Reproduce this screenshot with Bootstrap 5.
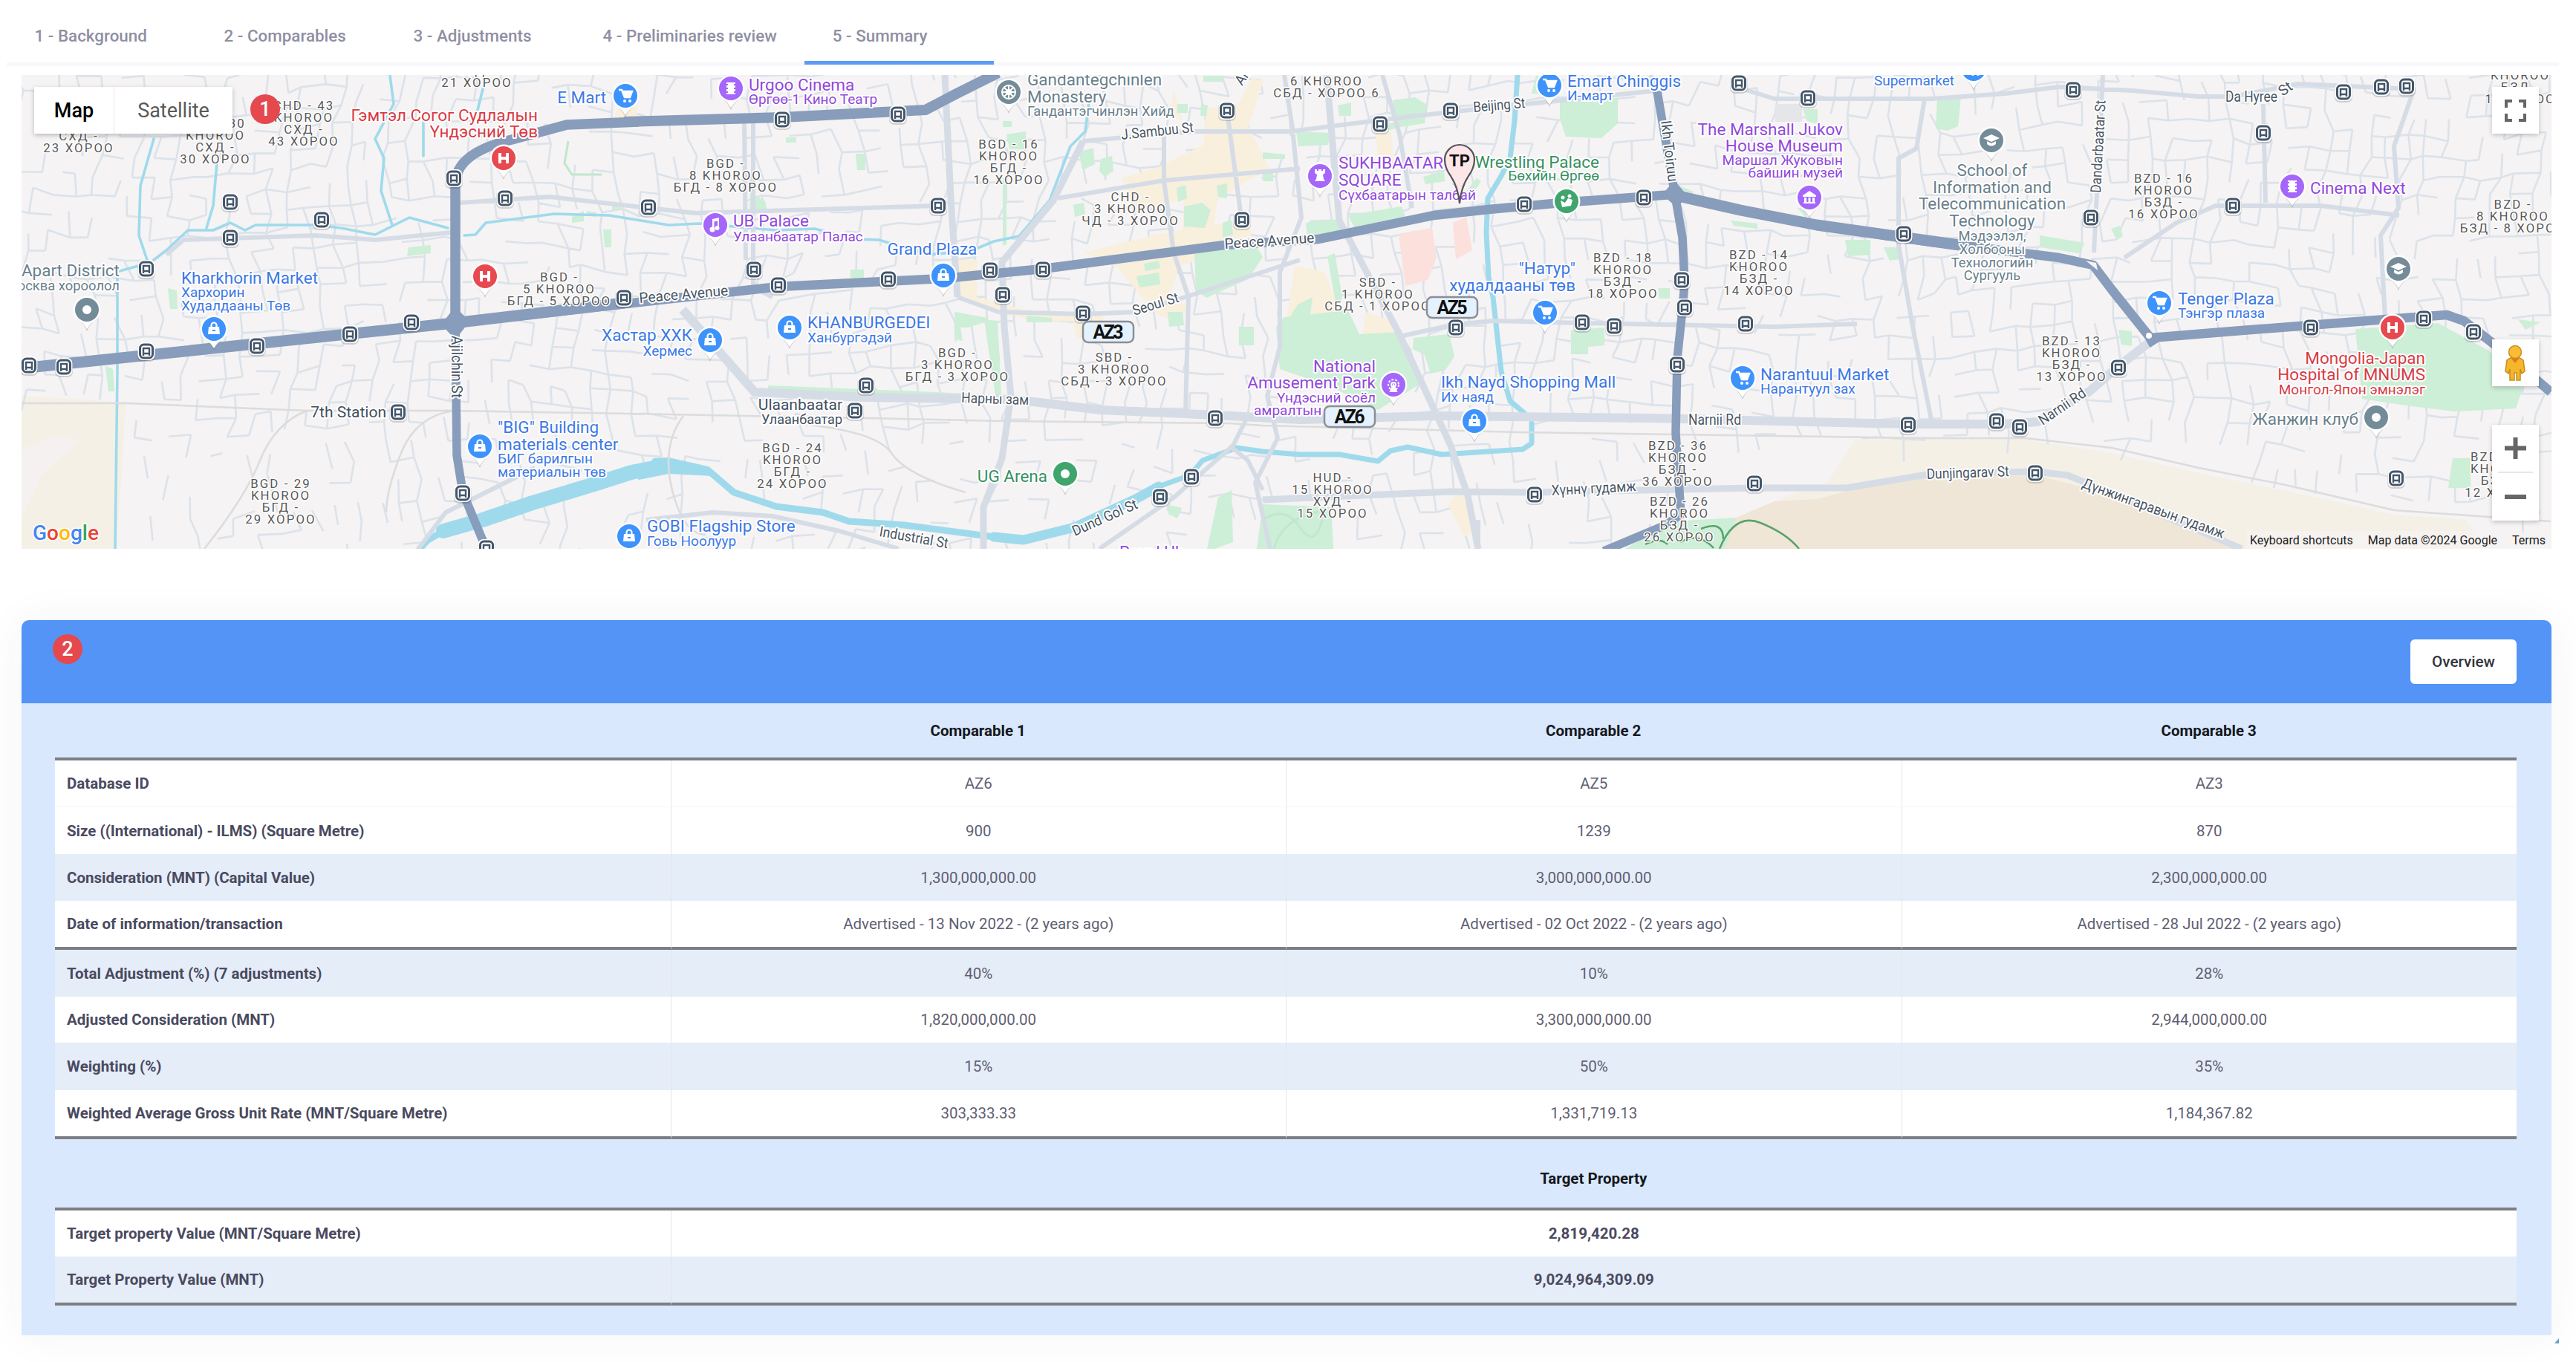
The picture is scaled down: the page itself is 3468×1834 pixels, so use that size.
<!DOCTYPE html>
<html lang="en">
<head>
<meta charset="utf-8">
<meta name="viewport" content="width=device-width, initial-scale=1">
<title>Valuation summary</title>
<link href="https://cdn.jsdelivr.net/npm/bootstrap@5.3.0/dist/css/bootstrap.min.css" rel="stylesheet">
<style>
  body { font-family: Roboto, "Liberation Sans", sans-serif; background: #fff; color: #47475e; font-size: 20.5px; overflow: hidden; }
  .steps { margin: 0 23px 0 9px; height: 89px; border-bottom: 5px solid #f8f8fc; }
  .steps .nav-link { min-width: 255px; height: 87px; padding: 0 37.5px; font-size: 22.4px; font-weight: 500; color: #8f8fa3; line-height: 96px; border: 0; white-space: nowrap; }
  .steps .nav-link.active { border-bottom: 5px solid #5b9cf6; }
  .map-frame { margin: 12px 33px 0 29px; height: 638px; overflow: hidden; }
  .map-frame svg.map-canvas { display: block; width: 3406px; height: 638px; }
  .map-type { top: 16px; left: 17px; height: 63px; font-size: 27px; color: #5a5a5a; box-shadow: 0 2px 6px rgba(0,0,0,.25); }
  .map-type span { line-height: 65px; text-align: center; }
  .map-type .type-on { width: 108px; color: #000; font-weight: 500; border-right: 1px solid #e6e6e6; }
  .map-type .type-off { width: 159px; }
  .step-dot { width: 40px; height: 40px; background: #e5484d; color: #fff; font-size: 27px; font-weight: 500; line-height: 41px; text-align: center; }
  .dot-map { top: 26px; left: 308px; }
  .dot-card { margin-top: 19px; }
  .map-tools { top: 16px; right: 17px; width: 63px; }
  .tool { width: 63px; background: #fff; box-shadow: 0 2px 6px rgba(0,0,0,.22); }
  .tool svg { display: block; }
  .tool-person { margin-top: 277px; }
  .tool-zoom { margin-top: 52px; }
  .legal { bottom: 0; right: 0; height: 24px; font-size: 16px; line-height: 17px; color: #222; background: rgba(245,243,243,.75); white-space: nowrap; }
  .summary { margin: 96px 33px 0 29px; background: #d9e8fc; border-radius: 12px 12px 0 0; box-shadow: 0 0 60px rgba(60,60,70,.05); height: 963px; }
  .summary-head { height: 112px; background: #5494f7; border-radius: 10px 10px 0 0; padding: 0 47px 0 42px; }
  .btn-overview { width: 143px; height: 60px; background: #fff; color: #33333b; font-size: 20.7px; font-weight: 500; border-radius: 6px; padding: 2px 0 0; border: 0; }
  .btn-overview:hover { background: #f3f3f3; }
  .figures { width: 3314px; margin-left: 45px; table-layout: fixed; border-collapse: separate; border-spacing: 0; line-height: 24px; }
  .figures th, .figures td { padding: 0 16px; vertical-align: middle; text-align: center; font-weight: 400; height: 63px; border-left: 1px solid #e3e6ea; }
  .figures th:first-child, .figures td:first-child { border-left: 0; }
  .figures tbody th { text-align: left; font-weight: 700; color: #4a4a60; }
  .figures tbody td { color: #5f5f74; }
  .figures .heading th { height: 77px; border-left: 0; border-bottom: 4px solid #7b7f84; font-weight: 700; color: #15171c; text-align: center; }
  .figures .heading-2 th { height: 96px; padding-top: 14px; }
  .figures .plain > * { background: #fff; }
  .figures .tint > * { background: #e5edf9; }
  .figures .thin > * { border-bottom: 1px solid #f6f6f8; }
  .figures .short > * { height: 62px; }
  .figures .tall > * { height: 64px; }
  .figures .rule > * { border-bottom: 4px solid #7b7f84; height: 66px; }
  .figures .strong-value td { font-weight: 700; color: #4a4a60; }
  .grip { right: 23px; bottom: 25px; width: 6px; height: 7px; }
  /* map lettering */
  .lb { paint-order: stroke; stroke: #fff; stroke-width: 4px; stroke-linejoin: round; font-family: Roboto, "Noto Sans", sans-serif; font-size: 22.5px; }
  .sub { font-size: 19px; }
  .blue { fill: #3d78e6; } .violet { fill: #9148dc; } .crimson { fill: #d93a44; } .leaf { fill: #36905f; } .slate { fill: #69808c; }
  .slate.sub { font-size: 18.4px; }
  .ink { fill: #41505f; font-size: 21px; } .ink.sub { font-size: 18px; }
  .hood { fill: #585858; font-size: 16.8px; letter-spacing: 2.1px; stroke-width: 3px; }
  .street { fill: #4a5664; font-size: 19.5px; }
</style>
</head>
<body class="position-relative vh-100">
<nav class="nav steps flex-nowrap">
  <a class="nav-link" href="#">1 - Background</a>
  <a class="nav-link" href="#">2 - Comparables</a>
  <a class="nav-link" href="#">3 - Adjustments</a>
  <a class="nav-link" href="#">4 - Preliminaries review</a>
  <a class="nav-link active" href="#">5 - Summary</a>
</nav>

<section class="map-frame position-relative">
  <svg class="map-canvas" viewBox="29 101 3406 638" xmlns="http://www.w3.org/2000/svg">
    <defs>
      <g id="bus"><rect x="-12" y="-11" width="24" height="25" rx="7" fill="#000" opacity=".15"/><rect x="-11.500" y="-12" width="23" height="24" rx="7" fill="#fff"/><rect x="-8.500" y="-9" width="17" height="18" rx="5" fill="#fff" stroke="#44566a" stroke-width="3"/><path d="M-4-4h8v7h-8zM-4 3v3M4 3v3" fill="none" stroke="#44566a" stroke-width="2.400"/></g>
      <g id="pin"><path d="M-13 13Q-3 20 0 29Q3 20 13 13Z" fill="#777" opacity=".35"/><path d="M-14 11Q-4 19 0 26Q4 19 14 11Z" fill="#fff"/><circle r="18.500" fill="#fff"/><circle r="16"/></g>
      <g id="cart" fill="#fff"><path d="M-9-8h4l4 10h7l3-8h-12" fill="none" stroke="#fff" stroke-width="2.500"/><path d="M-5-6h14l-3 8h-8z"/><circle cx="-1" cy="7" r="2"/><circle cx="6" cy="7" r="2"/></g>
      <g id="bag"><path d="M-7-3h14l1 10h-16z" fill="#fff"/><path d="M-3.500-3v-2a3.500 3.500 0 0 1 7 0v2" fill="none" stroke="#fff" stroke-width="2.200"/><path d="M-2 2h4" stroke="#3d93fb" stroke-width="2"/></g>
      <path id="hosp" d="M-5-7v14M5-7v14M-5 0h10" fill="none" stroke="#fff" stroke-width="4"/>
      <circle id="hole" r="6" fill="#fff"/>
      <g id="film"><path d="M-6-8h12v16h-12z" fill="#fff"/><path d="M-7-5h3M-7 0h3M-7 5h3M4-5h3M4 0h3M4 5h3" stroke="#a566fa" stroke-width="2"/></g>
      <g id="note" fill="#fff"><path d="M-4-8l9-2v4l-9 2zM-4-6h2.500v12h-2.500zM3-8h2v12h-2z"/><circle cx="-4" cy="6" r="3.500"/><circle cx="2.500" cy="4" r="3"/></g>
      <path id="rook" fill="#fff" d="M-7-9h3v2h2v-2h4v2h2v-2h3v5l-3 2 1 6 2 3h-14l2-3 1-6-3-2z"/>
      <path id="museum" fill="#fff" d="M0-9l9 6v2h-18v-2zM-7 0h3v6h-3zM-1.500 0h3v6h-3zM4 0h3v6h-3zM-8 6h16v2h-16z"/>
      <g id="wheel" fill="none" stroke="#fff" stroke-width="2"><circle r="9"/><circle r="3"/><path d="M0-9v18M-9 0h18M-6-6l12 12M6-6l-12 12"/></g>
      <g id="ferris" fill="none" stroke="#fff" stroke-width="2"><circle r="7" stroke-dasharray="3 2"/><circle r="3"/><path d="M0 0l-4 9h8z" fill="#fff"/></g>
      <g id="play" fill="#fff"><circle cx="-5" cy="-5" r="2.500"/><circle cx="4" cy="-7" r="2.500"/><path d="M-8-1l6 3 4-6 6 2-2 8-12 2z"/></g>
      <path id="grad" fill="#fff" d="M0-8l11 5-11 5-11-5zM-6 1v4q6 5 12 0v-4l-6 3z"/>
    </defs>
    <rect x="29" y="101" width="3406" height="638" fill="#f5f3f3"/>
    <path d="M29 533L115 538 169 543 164 633 156 739H29ZM2498 592L2600 591 2726 592 2843 610 2960 637 3077 661 3223 693 3320 700 3345 739H2320L2400 670 2460 650Z" fill="#f4f0e5"/>
    <path d="M29 605l52-20 25 10-50 45-27 60z" fill="#f4f1f0"/>
    <path d="M2337 697L2389 675 2446 672 2492 660 2600 642 2740 640 2800 655 3015 739H2310Z" fill="#efe6d7"/>
    <g id="blocks" fill="none" stroke="#dce2ea" stroke-width="2.600" stroke-linejoin="round"></g>
    <g fill="#f8efdd">
      <path d="M1510 240l50-15 60-30 4-50 60-3-5 25 30 60-70 40-10 80-40 10 5-90-65 20zM1283 350h32v50l80 22 90-2v35h-35l-5-22-60-2-100-35zM1460 340l100-25 120-20 5 22-90 20-20 60 30 20-30 14-20-10-50-60zM1580 120l-5 38 16 3zM1655 165l30-60 16 4-20 60zM1743 358l40 8 16 40-6 70-38-15-30 10 10-60zM1850 165h22l4 55h-20zM1838 420l34 12 12 48-30 10-20-30zM1950 680l14-20 20 18-3 40-10 5z"/>
      <path d="M838 135h20v28h-34z"/>
    </g>
    <path d="M1883 315l45-8 6 40-12 30-30 8zM1956 300l18-8 8 45-22 12z" fill="#fbe0dc"/>
    <path d="M2390 140h36v24h-36z" fill="#e4e6ea"/>
    <g fill="#cdeed7">
      <path d="M1729 427L1815 418 1830 450 1884 447 1900 470 1912 517 1855 552 1790 520 1723 497 1718 440ZM1903 455l48-5 7 30-12 18-20 5-8-25-16-8zM1700 679L1792 683 1795 739H1692ZM3171 443L3282 435 3352 473 3396 523 3387 550 3305 554 3247 547 3180 537ZM2337 697L2251 702 2188 739H2322Z"/>
      <path d="M1034 519l300 12 10 9-310-10zM1285 420l44 8v5l-26 8-10 0 3 18-10-2zM1382 425l34 3v6h-34zM1010 259l20 12 3 14h-24zM1058 185h14v7h-14zM1152 207h13v22h-11zM1355 181l26-4v24h-22zM1350 163h12v8h-12zM550 333l30-3v11l-32 4zM812 309h11v24h-9zM770 292l16-8v14l-16 2zM790 284l13 2-1 6-12-2zM824 275h12v8h-12zM226 388l12 3 1 25h-10zM142 493l10 4 2 30h-8zM1145 363h18v11h-18zM1350 240h5v90h-5zM1452 205l20-6 2 22-16 8zM1482 214l15-4 2 20-12 8-7-8zM1585 140h14v12h-14zM1617 140l9 2-2 14h-8zM1594 278l24-5 12 10-8 24-28-2zM1584 253l12-4 2 18-12 5zM1638 250l14-3v20l-12-2zM1445 276l14-3 2 15-14 4zM1646 300l12-4 2 20-14 4zM1608 340l80-14 12 20-20 30-56 25-14-10zM1530 372l30-5 2 16-28 4zM1540 355l20-4 2 10-20 4zM1668 440h20v25h-20zM1572 420h20l2 18-20 2zM1735 430l12-20 20-10-4 30z"/>
      <path d="M1745 177l45 2-2 16-40 2zM1801 142l18-4v18h-16zM1875 135l30-4 16 10-3 25-38 6zM1758 300l44-5 4 22-46 4zM1815 290l72-12 5 14-65 22zM1916 238l28-8 1 14-26 4zM1700 205l30 3v6h-30zM1855 170l60-14v8l-58 14zM2100 135l78-3v34l-22 20-48-2-8-24zM2068 102h20v24h-26zM1988 240l6 4-14 20-8-4zM1787 345l10-4 10 60-8 12zM2115 445l45-4v24l-22 2v10h-23zM2260 250l20 8-4 8zM2330 297l36 4v7l-32-4zM2420 280h14l-4 12zM2484 323h34v20l-30 2zM2536 333h22v16l-14 2zM2232 388h16v14h-14zM2608 135l32-5-4 40-14 6-16-3zM2427 147h20v20l-14-4zM2746 317l60 10-6 14-54-8zM2842 308l12-4 4 14-8 5zM2852 444l18 2v20l-14-2zM3302 617h24v40h-30zM3390 430l30 4-20 10z"/>
      <path d="M1640 670l18-10 2 70-25 9h-10zM1573 680l18 4-6 14-12-6zM1325 430l18 2 5 100h-8zM1620 102h26v8h-26zM1700 230h14v14h-14z"/>
    </g>
    <g fill="none" stroke="#bfe8cc" stroke-width="3"><path d="M765 190l-5 30 10 15h40M1700 700q30-20 50 10t30-10M1715 739q10-40 60-50"/></g>
    <g fill="none" stroke="#5aa36c" stroke-width="2.500"><path d="M2315 739Q2335 690 2370 704T2422 739M2290 712q30-12 30 14M2215 733q20-10 30 0M2262 730q25-14 45 8"/></g>
    <!-- water -->
    <g fill="none" stroke="#9fdaec" stroke-linejoin="round" stroke-linecap="round">
      <path d="M597 715L650 700 717 677 800 652 850 636 896 627" stroke-width="20"/>
      <path d="M880 618L900 617 953 629 960 640 900 637 860 645Z" fill="#9fdaec" stroke-width="2"/>
      <path d="M597 715L575 728 565 739M953 633L988 663 1045 682 1108 690 1143 702 1217 707 1338 723" stroke-width="9"/>
      <path d="M1338 723L1378 727 1447 710 1490 690 1527 673 1560 655" stroke-width="13"/>
      <path d="M1560 655L1602 640 1619 620 1665 603 1700 608 1750 612 1803 612 1855 621 1872 607 1895 602 1941 612 2050 605 2062 597 2062 570" stroke-width="7"/>
      <path d="M2053 557L2033 540 2021 500 2010 400 2004 373 2001 313 2003 267 2021 237 2033 213 2039 163 2043 101" stroke-width="7"/>
      <path d="M207 350L224 337 253 310 287 310 310 300 330 310 344 303 425 303 459 307 505 316 551 293 603 307M625 317L640 316 654 300 746 288 820 290 900 303 942 301 1045 310 1097 308 1148 322 1183 323 1252 343 1309 337 1338 325 1372 318 1413 270 1441 197 1461 177 1467 130M207 187L189 250 187 317 198 350M292 220L287 277 278 307M525 102L530 140 505 187 517 213 513 257 528 303M197 355L161 365M158 370V500L155 739M640 160L650 120M570 160V210" stroke-width="3.600"/>
    </g>
    <!-- railway -->
    <g fill="none" stroke="#dcdcdc"><path id="rail" d="M29 543H172L413 553H611L900 558 1166 563 1349 567 1654 570 1700 573 2044 582 2600 590 2726 590 2843 603 2960 630 3077 653 3223 687 3434 702" stroke-width="2.500"/><use href="#rail" stroke-width="9" stroke-dasharray="2 24"/><path d="M611 553Q560 560 540 610T520 690M413 553Q370 570 350 620T275 739M920 560Q890 600 905 660T950 720M1070 570Q1180 580 1200 610T1300 663" stroke-width="2.500"/></g>
    <!-- secondary roads -->
    <g fill="none" stroke="#d5dce6" stroke-linejoin="round">
      <path d="M919 417L1016 528 1166 535 1367 538 1481 552 1596 557 1750 565 1930 560 2217 563 2569 571 2696 571 2743 568 2813 527 2852 493 2895 460" stroke-width="12"/>
      <path d="M1272 101L1280 267 1289 400M1458 190L1418 270 1349 353 1352 440 1361 533 1349 617 1324 683V739M1786 101L1803 297 1838 363 1884 450 1930 550 1953 600 1976 667 1990 739M1700 673L1953 662 2067 663 2360 657 2486 657 2600 638 2740 635 2784 640 3018 739" stroke-width="9"/>
      <path d="M1002 160L1004 350M1014 160V387L1040 400M620 273L740 265 873 280 936 287 1263 277M224 343L247 323 425 317 505 323 608 313M1289 400L1344 420 1458 423 1530 420 1596 400 1750 350M1458 190L1608 177H1737L1872 160 1987 147 2231 122M1424 267L1567 243 1750 227M1729 101L1740 173 1752 293 1723 367 1723 467 1706 533 1720 590 1690 650 1710 739M1861 101L1884 180 1901 280M1889 452L1958 437 2010 432 2130 435 2389 440 2500 436M1567 243V180M1567 243L1580 340 1600 400 1596 557M1652 150L1672 300M2341 118L2389 133H2600L2700 126 2772 117 2870 122 2960 130H3007L3094 113 3250 120 3223 197 3229 280 3205 317 3211 430M2591 133L2580 200 2556 213V330L2575 440 2600 565M2831 101L2819 340M3047 140L3050 273M2860 347L2930 300 2983 277H3124L3230 290M1655 600L1680 620 1700 660M1680 560L1660 600 1580 670 1480 739M870 700L960 690 1040 695 1130 715 1210 739M563 739L600 690 720 630M2222 101L2231 123M1990 739V700" stroke-width="6"/>
    </g>
    <!-- trunk roads -->
    <g fill="none" stroke="#889cbb" stroke-linejoin="round">
      <path d="M29 496L86 490 611 435 1048 386 1270 375 1404 362 1648 330 1775 322 1843 308 1930 290 2004 282 2102 273 2251 262 2343 283 2446 303 2600 326 2638 330 2772 347 2818 357 2843 390 2895 455 3018 445 3212 430 3294 424 3317 432 3370 473 3434 528" stroke-width="12.500"/>
      <path d="M29 496L86 490 611 435 840 408M2251 262L2343 283 2446 303 2638 330" stroke-width="15"/>
      <path d="M840 164L1053 158 1246 148 1286 127 1344 98" stroke-width="14"/>
      <path d="M613 440V245Q616 205 689 188L763 168 860 164" stroke-width="13.500"/>
      <path d="M613 435L615 613 623 663 655 740M2231 123L2254 257 2265 320 2268 380 2265 417 2258 483 2256 583 2263 693 2240 708 2159 742" stroke-width="11.500"/>
      <path d="M596 437L613 415 630 433 613 455ZM2240 262L2254 245 2272 266 2256 276ZM2885 448L2895 466 2915 453Z" fill="#889cbb" stroke-width="3"/>
    </g>
    <circle cx="2893" cy="452" r="4" fill="#fff"/><path d="M2808 351l14 3 2 10z" fill="#f5f3f3"/>
    <g id="stops"></g>
    <g id="places"></g>
    <g id="names"></g>
    <!-- comparables and target property -->
    <g font-family="Roboto, sans-serif" font-weight="700" font-size="25" text-anchor="middle" fill="#111">
      <g fill="#e4f1fe" stroke="#8b8f94" stroke-width="2.500"><rect x="1458" y="433" width="68" height="28" rx="7"/><rect x="1921" y="400" width="68" height="28" rx="7"/><rect x="1783" y="547" width="68" height="28" rx="7"/></g>
      <text x="1492" y="456" textLength="41">AZ3</text><text x="1955" y="423" textLength="41">AZ5</text><text x="1817" y="570" textLength="41">AZ6</text>
      <path d="M1965 274Q1963 252 1953 237Q1945 226 1945 215A20 20 0 0 1 1985 215Q1985 226 1977 237Q1967 252 1965 274Z" fill="#fde6e8" stroke="#55555a" stroke-width="2.200"/>
      <text x="1965" y="224" font-size="22">TP</text>
    </g>
    <text x="44" y="727" font-family="Roboto, sans-serif" font-size="28" font-weight="500" textLength="89" paint-order="stroke" stroke="#fff" stroke-width="3"><tspan fill="#4285f4">G</tspan><tspan fill="#ea4335">o</tspan><tspan fill="#fbbc05">o</tspan><tspan fill="#4285f4">g</tspan><tspan fill="#34a853">l</tspan><tspan fill="#ea4335">e</tspan></text>
  </svg>

  <div class="map-type position-absolute d-flex bg-white"><span class="type-on">Map</span><span class="type-off">Satellite</span></div>
  <div class="step-dot dot-map rounded-circle position-absolute">1</div>
  <div class="map-tools position-absolute d-flex flex-column">
    <div class="tool"><svg width="63" height="63" viewBox="0 0 63 63"><path d="M19 28V19h8M36 19h8v9M44 36v9h-8M27 45h-8v-9" fill="none" stroke="#666" stroke-width="4"/></svg></div>
    <div class="tool tool-person"><svg width="63" height="63" viewBox="0 0 63 63"><path d="M20 28q11-9 22 0l2 15-4 3-2-6v15h-5v-10h-3v10h-6v-15l-2 6-4-3z" fill="#f4b62c" stroke="#c98d1c" stroke-width="1.500"/><path d="M25 25l6 7 6-7z" fill="#e27a1e"/><circle cx="31" cy="17" r="8.500" fill="#f8bd35" stroke="#c98d1c" stroke-width="1.500"/></svg></div>
    <div class="tool tool-zoom"><svg width="63" height="129" viewBox="0 0 63 129"><path d="M17 31.500h29M31.500 17v29M17 97h29" stroke="#666" stroke-width="6"/><path d="M8 64h47" stroke="#e6e6e6" stroke-width="2"/></svg></div>
  </div>
  <div class="legal position-absolute d-flex align-items-center"><span class="ps-1 pe-2">Keyboard shortcuts</span><span class="px-2 ms-1">Map data ©2024 Google</span><span class="px-2 ms-1">Terms</span></div>
</section>

<section class="summary">
  <header class="summary-head d-flex justify-content-between">
    <span class="step-dot dot-card rounded-circle flex-shrink-0">2</span>
    <button type="button" class="btn btn-overview align-self-center">Overview</button>
  </header>
  <table class="figures">
    <thead><tr class="heading"><th></th><th>Comparable 1</th><th>Comparable 2</th><th>Comparable 3</th></tr></thead>
    <tbody>
      <tr class="plain thin"><th>Database ID</th><td>AZ6</td><td>AZ5</td><td>AZ3</td></tr>
      <tr class="plain"><th>Size ((International) - ILMS) (Square Metre)</th><td>900</td><td>1239</td><td>870</td></tr>
      <tr class="tint"><th>Consideration (MNT) (Capital Value)</th><td>1,300,000,000.00</td><td>3,000,000,000.00</td><td>2,300,000,000.00</td></tr>
      <tr class="plain rule"><th>Date of information/transaction</th><td>Advertised - 13 Nov 2022 - (2 years ago)</td><td>Advertised - 02 Oct 2022 - (2 years ago)</td><td>Advertised - 28 Jul 2022 - (2 years ago)</td></tr>
      <tr class="tint"><th>Total Adjustment (%) (7 adjustments)</th><td>40%</td><td>10%</td><td>28%</td></tr>
      <tr class="plain short"><th>Adjusted Consideration (MNT)</th><td>1,820,000,000.00</td><td>3,300,000,000.00</td><td>2,944,000,000.00</td></tr>
      <tr class="tint tall"><th>Weighting (%)</th><td>15%</td><td>50%</td><td>35%</td></tr>
      <tr class="plain rule"><th>Weighted Average Gross Unit Rate (MNT/Square Metre)</th><td>303,333.33</td><td>1,331,719.13</td><td>1,184,367.82</td></tr>
      <tr class="heading heading-2"><th></th><th colspan="3">Target Property</th></tr>
      <tr class="plain short strong-value"><th>Target property Value (MNT/Square Metre)</th><td colspan="3">2,819,420.28</td></tr>
      <tr class="tint rule strong-value"><th>Target Property Value (MNT)</th><td colspan="3">9,024,964,309.09</td></tr>
    </tbody>
  </table>
</section>
<svg class="grip position-absolute" viewBox="0 0 6 7"><path d="M6 0v7H0Z" fill="#6f9fc4"/></svg>

<script>
  const NS = 'http://www.w3.org/2000/svg';
  const add = (parent, tag, attrs, text) => {
    const el = document.createElementNS(NS, tag);
    for (const k in attrs) el.setAttribute(k, attrs[k]);
    if (text) el.textContent = text;
    document.getElementById(parent).appendChild(el);
  };

  // Residential street network: an irregular lattice, seeded so it is stable between loads
  let seed = 7;
  const rnd = () => (seed = (seed * 16807) % 2147483647) / 2147483647;
  const step = 27, cols = 130, rows = 26, pts = [];
  for (let r = 0; r < rows; r++) {
    pts.push([]);
    for (let c = 0; c < cols; c++)
      pts[r].push([20 + c * step + Math.sin(r * .5 + c * .11) * 12 + (rnd() - .5) * 13, 92 + r * step + Math.sin(c * .22) * 13 + (rnd() - .5) * 9]);
  }
  const open = (x, y) => (x < 175 && y > 525) || (x > 2300 && y > 592 + Math.max(0, x - 2800) * .19) || (x > 1718 && x < 1912 && y > 425 && y < 550) || (x > 1690 && x < 1795 && y > 680);
  let d = '';
  for (let r = 0; r < rows - 1; r++) for (let c = 0; c < cols - 1; c++) {
    const [x, y] = pts[r][c];
    const sparse = y > 560 ? .24 : .5;
    const h = rnd(), v = rnd();
    if (open(x, y)) continue;
    if (h < sparse) d += `M${x.toFixed(1)} ${y.toFixed(1)}L${pts[r][c + 1].map(n => n.toFixed(1)).join(' ')}`;
    if (v < sparse + .08) d += `M${x.toFixed(1)} ${y.toFixed(1)}L${pts[r + 1][c].map(n => n.toFixed(1)).join(' ')}`;
  }
  add('blocks', 'path', { d });

  // Bus stops
  [[611,240],[680,267],[310,272],[433,296],[310,320],[197,362],[873,279],[840,401],[39,492],[86,494],[197,473],[346,466],[471,450],[554,434],[536,555],[623,664],[655,738],[1053,161],[1209,154],[1263,277],[1015,363],[1048,384],[1196,376],[1333,364],[1404,363],[1350,397],[1458,422],[1652,149],[1672,296],[1166,519],[1151,553],[1636,563],[1604,642],[1562,669],[1953,149],[1858,167],[2052,275],[2213,266],[2341,112],[2434,132],[2563,315],[2264,377],[2268,414],[1960,441],[2130,434],[2173,439],[2258,491],[2350,436],[2066,666],[2362,651],[2569,572],[2791,121],[3155,124],[3206,117],[3240,116],[3047,179],[3006,277],[2815,293],[2688,567],[2719,575],[2852,495],[3111,441],[3263,429],[3330,447],[3226,644],[2740,637]]
    .forEach(([x, y]) => add('stops', 'use', { href: '#bus', x, y }));

  // Places: x, y, colour, glyph
  const B = '#3d93fb', V = '#a566fa', R = '#e8484f', G = '#3fa56c', S = '#748c98';
  [[842,129,B,'cart'],[678,213,R,'hosp'],[653,372,R,'hosp'],[288,443,B,'bag'],[117,417,S,'hole'],[646,601,B,'bag'],[847,722,B,'bag'],[984,119,V,'film'],[1358,124,S,'wheel'],[963,303,V,'note'],[1270,371,B,'bag'],[1063,441,B,'bag'],[956,458,B,'bag'],[1434,638,G,'hole'],[1777,237,V,'rook'],[2086,115,B,'cart'],[2109,271,G,'play'],[2436,266,V,'museum'],[2080,421,B,'cart'],[1876,518,V,'ferris'],[1985,567,B,'bag'],[2346,509,B,'cart'],[2657,93,B,'cart'],[2681,189,S,'grad'],[3086,251,V,'film'],[3229,362,S,'grad'],[2907,408,B,'cart'],[3221,441,R,'hosp'],[3199,562,S,'hole']]
    .forEach(([x, y, fill, glyph]) => {
      add('places', 'use', { href: '#pin', x, y, fill });
      add('places', 'use', { href: '#' + glyph, x, y });
    });

  // Lettering: class, anchor, x, baselines, lines
  const put = (cls, anchor, x, ys, lines) => lines.forEach((t, i) => add('names', 'text', { class: 'lb ' + cls, 'text-anchor': anchor, x, y: ys[i] }, t));
  const hood = (x, y, ...lines) => put('hood', 'middle', x, lines.map((_, i) => y + i * 16), lines);
  hood(642, 101, 'БГД -', '21 ХОРОО');
  hood(409, 148, 'CHD - 43', 'KHOROO', 'СХД -', '43 ХОРОО');
  hood(290, 172, 'SHD - 30', 'KHOROO', 'СХД -', '30 ХОРОО');
  hood(106, 189, 'СХД -', '23 ХОРОО');
  hood(753, 379, 'BGD -', '5 KHOROO', 'БГД - 5 ХОРОО');
  hood(378, 657, 'BGD - 29', 'KHOROO', 'БГД -', '29 ХОРОО');
  hood(977, 226, 'BGD -', '8 KHOROO', 'БГД - 8 ХОРОО');
  hood(1358, 200, 'BGD - 16', 'KHOROO', 'БГД -', '16 ХОРОО');
  hood(1522, 271, 'CHD -', '3 KHOROO', 'ЧД - 3 ХОРОО');
  hood(1786, 115, '6 KHOROO', 'СБД - ХОРОО 6');
  hood(1289, 481, 'BGD -', '3 KHOROO', 'БГД - 3 ХОРОО');
  hood(1500, 487, 'SBD -', '3 KHOROO', 'СБД - 3 ХОРОО');
  hood(1067, 609, 'BGD - 24', 'KHOROO', 'БГД -', '24 ХОРОО');
  hood(1855, 386, 'SBD -', '1 KHOROO', 'СБД - 1 ХОРОО');
  hood(2185, 353, 'BZD - 18', 'KHOROO', 'БЗД -', '18 ХОРОО');
  hood(2368, 349, 'BZD - 14', 'KHOROO', 'БЗД -', '14 ХОРОО');
  hood(2259, 606, 'BZD - 36', 'KHOROO', 'БЗД -', '36 ХОРОО');
  hood(2261, 681, 'BZD - 26', 'KHOROO', 'БЗД -', '26 ХОРОО');
  hood(1794, 649, 'HUD -', '15 KHOROO', 'ХУД -', '15 ХОРОО');
  hood(2913, 246, 'BZD - 16', 'KHOROO', 'БЗД -', '16 ХОРОО');
  hood(3383, 281, 'BZD -', '8 KHOROO', 'БЗД - 8 ХОРОО');
  hood(3393, 107, 'KHOROO', 'БЗД -', '10 ХОРОО');
  hood(2789, 465, 'BZD - 13', 'KHOROO', 'БЗД -', '13 ХОРОО');
  hood(3366, 621, 'BZD - 12', 'KHOROO', 'БЗД -', '12 ХОРОО');

  put('blue', 'end', 816, [139], ['E Mart']);
  put('crimson', 'end', 724, [163, 185], ['Гэмтэл Согог Судлалын', 'Үндэсний Төв']);
  put('slate', 'end', 161, [372], ['Apart District']);
  put('slate sub', 'end', 161, [391], ['осква хороолол']);
  put('blue', 'start', 244, [382], ['Kharkhorin Market']);
  put('blue sub', 'start', 244, [400, 418], ['Хархорин', 'Худалдааны Төв']);
  put('blue', 'end', 932, [459], ['Хастар ХХК']);
  put('blue sub', 'end', 932, [479], ['Хермес']);
  put('ink', 'end', 520, [562], ['7th Station']);
  put('blue', 'start', 670, [583, 606], ['"BIG" Building', 'materials center']);
  put('blue sub', 'start', 670, [624, 642], ['БИГ барилгын', 'материалын төв']);
  put('blue', 'start', 871, [716], ['GOBI Flagship Store']);
  put('blue sub', 'start', 871, [735], ['Говь Ноолуур']);
  put('violet', 'start', 1008, [122], ['Urgoo Cinema']);
  put('violet sub', 'start', 1008, [140], ['Өргөө-1 Кино Театр']);
  put('slate', 'start', 1383, [115, 138], ['Gandantegchinlen', 'Monastery']);
  put('slate sub', 'start', 1383, [156], ['Гандантэгчинлэн Хийд']);
  put('violet', 'start', 987, [305], ['UB Palace']);
  put('violet sub', 'start', 987, [325], ['Улаанбаатар Палас']);
  put('blue', 'middle', 1255, [343], ['Grand Plaza']);
  put('blue', 'start', 1087, [442], ['KHANBURGEDEI']);
  put('blue sub', 'start', 1087, [461], ['Ханбургэдэй']);
  put('ink', 'end', 1134, [552], ['Ulaanbaatar']);
  put('ink sub', 'end', 1134, [571], ['Улаанбаатар']);
  put('leaf', 'end', 1410, [649], ['UG Arena']);
  put('violet', 'start', 1507, [751], ['Royal Ub']);
  put('violet', 'end', 1852, [501, 523], ['National', 'Amusement Park']);
  put('violet sub', 'end', 1852, [542], ['Үндэсний соёл']);
  put('violet sub', 'start', 1688, [559], ['амралтын хү']);
  put('violet', 'start', 1802, [227, 250], ['SUKHBAATAR', 'SQUARE']);
  put('violet sub', 'start', 1802, [269], ['Сүхбаатарын талбай']);
  put('leaf', 'end', 2153, [226], ['Wrestling Palace']);
  put('leaf sub', 'end', 2153, [243], ['Бөхийн Өргөө']);
  put('blue', 'start', 2110, [117], ['Emart Chinggis']);
  put('blue sub', 'start', 2110, [135], ['И-март']);
  put('violet', 'end', 2481, [182, 204], ['The Marshall Jukov', 'House Museum']);
  put('violet sub', 'end', 2481, [222, 239], ['Маршал Жуковын', 'байшин музей']);
  put('blue', 'end', 2121, [369, 392], ['"Натур"', 'худалдааны төв']);
  put('blue', 'start', 1940, [522], ['Ikh Nayd Shopping Mall']);
  put('blue sub', 'start', 1940, [541], ['Их наяд']);
  put('blue', 'start', 2370, [512], ['Narantuul Market']);
  put('blue sub', 'start', 2370, [530], ['Нарантуул зах']);
  put('blue sub', 'end', 2631, [115], ['Supermarket']);
  put('slate', 'middle', 2682, [237, 260, 282, 305], ['School of', 'Information and', 'Telecommunication', 'Technology']);
  put('slate sub', 'middle', 2682, [324, 342, 360, 377], ['Мэдээлэл,', 'Холбооны', 'Технологийн', 'Сургууль']);
  put('violet', 'start', 3110, [261], ['Cinema Next']);
  put('blue', 'start', 2932, [410], ['Tenger Plaza']);
  put('blue sub', 'start', 2932, [428], ['Тэнгэр плаза']);
  put('crimson', 'end', 3265, [490, 512], ['Mongolia-Japan', 'Hospital of MNUMS']);
  put('crimson sub', 'end', 3265, [531], ['Монгол-Япон эмнэлэг']);
  put('slate', 'end', 3175, [572], ['Жанжин клуб']);

  // Street names: x, y, angle, length, text
  [[861,408,-5,120,'Peace Avenue'],[1649,335,-4,121,'Peace Avenue'],[608,452,90,84,'Ajilchin St'],[1510,188,-6,98,'J.Sambuu St'],[1672,116,-55,22,'An'],[1527,425,-17,64,'Seoul St'],[1294,542,2,91,'Нарны зам'],[1183,722,10,94,'Industrial St'],[1447,722,-24,94,'Dund Gol St'],[1984,151,-5,70,'Beijing St'],[2236,163,83,83,'Ikh Toiruu'],[2273,572,0,71,'Narnii Rd'],[2089,667,-3,114,'Хүннү гудамж'],[2828,260,-87,125,'Dandarbaatar St'],[2996,137,0,70,'Da Hyree'],[3073,130,-35,18,'St'],[2750,573,-34,72,'Narnii Rd'],[2594,645,-2,111,'Dunjingarav St'],[2802,656,20,202,'Дүнжингаравын гудамж']]
    .forEach(([x, y, a, len, t]) => add('names', 'text', { class: 'lb street', transform: `translate(${x} ${y}) rotate(${a})`, textLength: len, lengthAdjust: 'spacingAndGlyphs' }, t));
</script>
<script src="https://cdn.jsdelivr.net/npm/bootstrap@5.3.0/dist/js/bootstrap.bundle.min.js"></script>
</body>
</html>
